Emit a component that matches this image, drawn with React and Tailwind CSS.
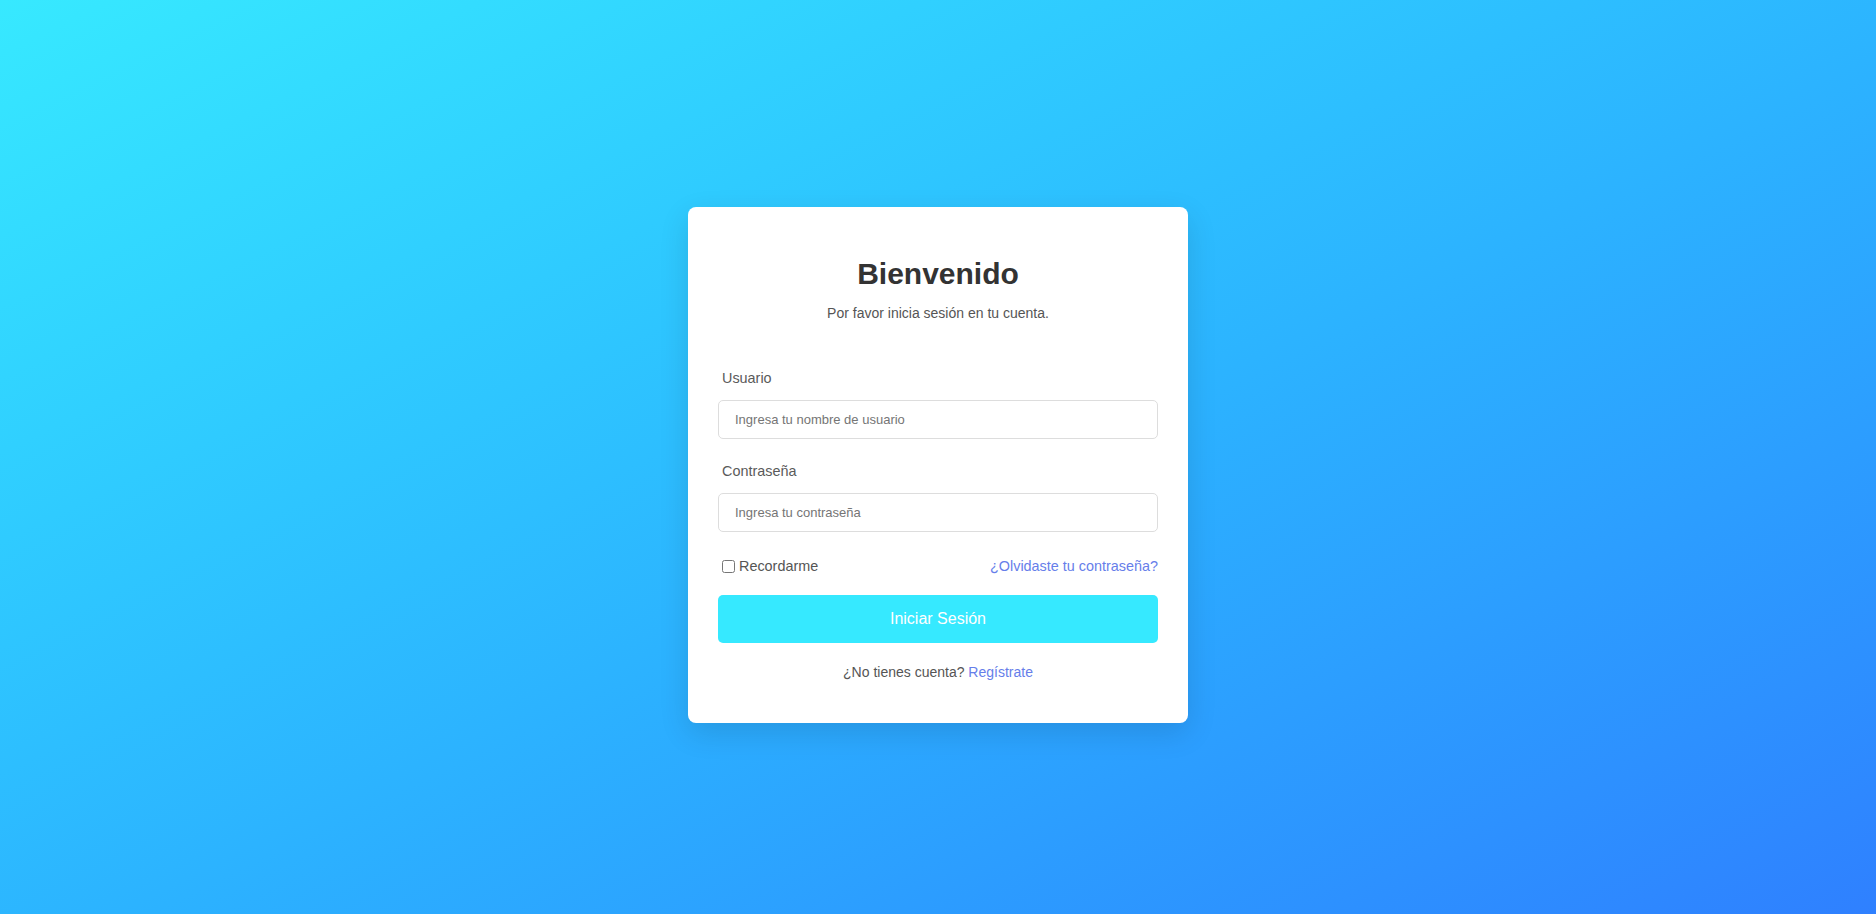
export default function App() {
  return (
    <div
      className="min-h-screen w-full flex justify-center items-start pt-[207px] bg-gradient-to-br from-[#37e9ff] to-[#2f80ff]"
      style={{ fontFamily: '"Liberation Sans", Arial, sans-serif' }}
    >
      <div className="w-[500px] bg-white rounded-lg shadow-[0_10px_30px_rgba(0,0,0,0.12)] pt-[49px] px-[30px] pb-[41px]">
        <h1 className="text-[30px] leading-[36px] font-bold text-[#333] text-center">Bienvenido</h1>
        <p className="mt-[11px] text-sm leading-5 text-[#555] text-center">
          Por favor inicia sesión en tu cuenta.
        </p>

        <div className="mt-[45px]">
          <label className="block pl-1 text-[14.4px] leading-5 text-[#5a5a5a] mb-3">Usuario</label>
          <input
            type="text"
            placeholder="Ingresa tu nombre de usuario"
            className="block w-full h-[39px] border border-[#ddd] rounded-[5px] px-4 text-[13px] text-[#333] placeholder:text-[#757575] outline-none"
          />
        </div>

        <div className="mt-[22px]">
          <label className="block pl-1 text-[14.4px] leading-5 text-[#5a5a5a] mb-3">Contraseña</label>
          <input
            type="password"
            placeholder="Ingresa tu contraseña"
            className="block w-full h-[39px] border border-[#ddd] rounded-[5px] px-4 text-[13px] text-[#333] placeholder:text-[#757575] outline-none"
          />
        </div>

        <div className="mt-[24px] h-5 flex items-center justify-between text-[14.4px] leading-5">
          <label className="flex items-center text-[#555]">
            <input type="checkbox" className="m-0 ml-1 mr-[4px] w-[13px] h-[13px]" />
            <span>Recordarme</span>
          </label>
          <a href="#" className="text-[#667eea]">¿Olvidaste tu contraseña?</a>
        </div>

        <button className="mt-[19px] w-full h-[48px] rounded-[5px] bg-[#36e9ff] text-white text-base">
          Iniciar Sesión
        </button>

        <p className="mt-[19px] text-sm leading-5 text-[#555] text-center">
          ¿No tienes cuenta? <a href="#" className="text-[#667eea]">Regístrate</a>
        </p>
      </div>
    </div>
  );
}
